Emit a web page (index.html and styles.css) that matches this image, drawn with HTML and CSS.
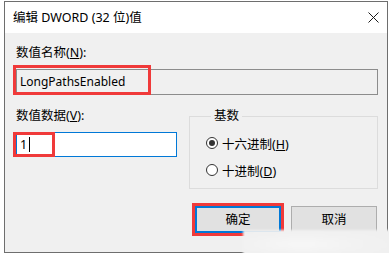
FILE: index.html
```html
<!DOCTYPE html>
<html lang="zh-CN">
<head>
<meta charset="utf-8">
<title>编辑 DWORD (32 位)值</title>
<link rel="stylesheet" href="styles.css">
</head>
<body>
<div class="window">
  <div class="titlebar">
    <span class="title">编辑 DWORD (32 位)值</span>
    <svg class="close" width="11" height="11" viewBox="0 0 11 11"><path d="M0.5 0.5 L10.5 10.5 M10.5 0.5 L0.5 10.5" stroke="#1a1a1a" stroke-width="1" fill="none"/></svg>
  </div>
  <div class="content">
    <div class="label">数值名称(<u>N</u>):</div>
    <div class="field name-field">LongPathsEnabled<span class="mark mark-name"></span></div>
    <div class="row">
      <div class="col-left">
        <div class="label">数值数据(<u>V</u>):</div>
        <div class="field data-field">1<span class="caret"></span><span class="mark mark-data"></span></div>
      </div>
      <fieldset class="radix">
        <legend>基数</legend>
        <div class="radio-row"><span class="radio checked"></span><span>十六进制(<u>H</u>)</span></div>
        <div class="radio-row second"><span class="radio"></span><span>十进制(<u>D</u>)</span></div>
      </fieldset>
    </div>
    <div class="buttons">
      <div class="btn btn-ok">确定<span class="mark mark-ok"></span></div>
      <div class="btn">取消</div>
    </div>
  </div>
  <div class="smudge"></div>
</div>
</body>
</html>
```
FILE: styles.css
```css
* { box-sizing: border-box; }
html, body { margin: 0; padding: 0; background: #ffffff; }
body {
  font-family: "Noto Sans", "Noto Sans CJK SC", sans-serif;
  font-size: 12.5px;
  color: #000;
}
.window {
  margin: 1px 0 0 4px;
  width: 384px;
  height: 252px;
  border: 1px solid #6e6e6e;
  background: #f0f0f0;
  position: relative;
}
.titlebar {
  height: 31px;
  background: #ffffff;
  display: flex;
  align-items: center;
  justify-content: space-between;
  padding: 0 8px 0 8px;
}
.title { line-height: 16px; }
.close { display: block; }
.content {
  padding: 12px 9px 0 11px;
}
.label { line-height: 16px; }
u { text-decoration: underline; text-underline-offset: 1px; }
.field {
  position: relative;
  margin-top: 8px;
  height: 26px;
  display: flex;
  align-items: center;
  padding-left: 3px;
  line-height: 16px;
}
.name-field {
  border: 1px solid #8c8c8c;
  background: #f0f0f0;
  font-size: 12px;
}
.data-field {
  border: 1px solid #0078d7;
  background: #ffffff;
  height: 25px;
}
.caret {
  display: inline-block;
  width: 1px;
  height: 15px;
  background: #000;
  margin-left: 2px;
}
.mark {
  position: absolute;
  border: 3px solid #f03a3a;
  pointer-events: none;
}
.mark-name { left: -4px; top: -5px; width: 138px; height: 30px; }
.mark-data { left: -4px; top: -1px; width: 42px; height: 25px; }
.mark-ok { left: -5px; top: -5px; width: 92px; height: 33px; }
.row {
  margin-top: 13px;
  display: flex;
  gap: 12px;
}
.col-left { width: 161px; }
.radix {
  flex: 1;
  margin: 0;
  padding: 11px 0 10px 16px;
  border: 1px solid #dcdcdc;
  min-width: 0;
}
.radix legend {
  padding: 0 3px;
  margin-left: 5px;
  line-height: 16px;
}
.radio-row {
  display: flex;
  align-items: center;
  gap: 4px;
  height: 16px;
}
.radio-row.second { margin-top: 11px; }
.radio {
  width: 12px;
  height: 12px;
  border: 1px solid #333;
  border-radius: 50%;
  background: #fff;
  display: flex;
  align-items: center;
  justify-content: center;
}
.radio.checked::after {
  content: "";
  width: 6px;
  height: 6px;
  border-radius: 50%;
  background: #333;
}
.buttons {
  margin-top: 17px;
  display: flex;
  justify-content: flex-end;
  gap: 10px;
  padding-right: 1px;
}
.btn {
  position: relative;
  width: 86px;
  height: 27px;
  background: #e1e1e1;
  border: 1px solid #adadad;
  display: flex;
  align-items: center;
  justify-content: center;
  line-height: 16px;
}
.btn-ok { border: 2px solid #0078d7; }
.smudge {
  position: absolute;
  left: 238px;
  right: -4px;
  bottom: -4px;
  height: 26px;
  background: radial-gradient(ellipse at 40% 55%, #f7f7f7 0%, #f2f2f2 45%, #f0f0f0 80%);
  filter: blur(1px);
  pointer-events: none;
}
```
